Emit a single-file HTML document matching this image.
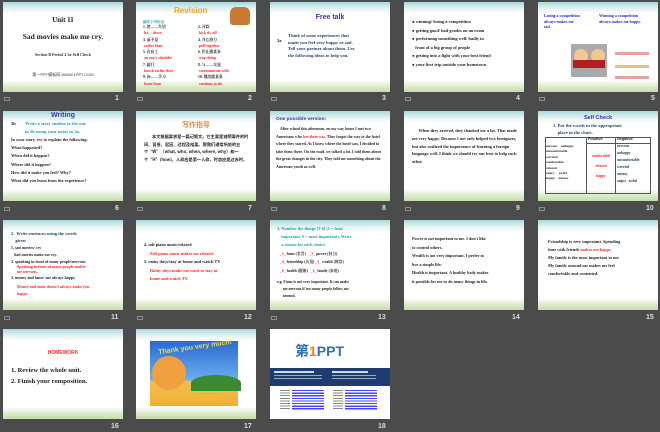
<!DOCTYPE html>
<html><head><meta charset="utf-8"><style>
*{margin:0;padding:0;box-sizing:border-box}
body{width:660px;height:432px;background:#4b4b4b;position:relative;overflow:hidden;font-family:"Liberation Serif","Noto Serif CJK SC",serif}
.s{position:absolute;width:120px;height:90px;background:#fff;overflow:hidden}
.g::before{content:"";position:absolute;left:0;top:0;right:0;height:12px;background:linear-gradient(#a9d9dc,#e6f4f3 60%,rgba(255,255,255,0))}
.g::after{content:"";position:absolute;left:0;bottom:0;right:0;height:12px;background:linear-gradient(rgba(255,255,255,0),#dfeccf 50%,#c6dca8)}
.s div,.s span.p{position:absolute;z-index:2}
.n{position:absolute;color:#ddd;font:bold 7px "Liberation Sans",sans-serif}
.ic{position:absolute;width:6px;height:4px;border:1px solid #aaa;opacity:.7}
.t{font-size:4.6px;line-height:7.6px;color:#222;font-weight:bold}
.r{color:#f22}
.b{color:#2a2aa8}
.c{color:#1aa0a8}
.h{font-family:"Liberation Sans",sans-serif;font-weight:bold}
</style></head><body>

<!-- Row 1 -->
<div class="s g" style="left:3px;top:2px">
 <div class="h" style="left:0;width:120px;top:14px;text-align:center;font-family:'Liberation Serif';font-size:7px;color:#222">Unit 11</div>
 <div style="left:0;width:120px;top:30px;text-align:center;font-size:7.5px;font-weight:bold;color:#222">Sad movies make me cry.</div>
 <div style="left:0;width:120px;top:50px;text-align:center;font-size:4px;font-weight:bold;color:#333">Section B  Period 4 3a-Self Check</div>
 <div style="left:0;width:120px;top:70px;text-align:center;font:4px 'Liberation Sans','Noto Sans CJK SC',sans-serif;color:#333">第一PPT模板网-WWW.1PPT.COM</div>
</div>
<div class="s g" style="left:136px;top:2px">
 <div class="h" style="left:38px;top:4px;font-size:8px;color:#f0a020">Revision</div>
 <div style="left:94px;top:5px;width:20px;height:18px;background:#c87a30;border-radius:6px 6px 3px 3px"></div>
 <div style="left:7px;top:18px;font-size:3.5px;color:#1aa;font-weight:bold">翻译下列短语。</div>
 <div class="t" style="left:7px;top:22px;font-size:3.8px;line-height:6.3px">1. 使……失望<br><span class="r">&nbsp;let… down</span><br>3. 而不是<br><span class="r">&nbsp;rather than</span><br>5. 在肩上<br><span class="r">&nbsp;on one's shoulder</span><br>7. 敲门<br><span class="r">&nbsp;knock on the door</span><br>9. 向……学习<br><span class="r">&nbsp;learn from</span></div>
 <div class="t" style="left:62px;top:22px;font-size:3.8px;line-height:6.3px">2. 开除<br><span class="r">&nbsp;kick sb. off</span><br>4. 齐心协力<br><span class="r">&nbsp;pull together</span><br>6. 停止做某事<br><span class="r">&nbsp;stop doing</span><br>8. 与……交流<br><span class="r">&nbsp;communicate with</span><br>10. 继续做某事<br><span class="r">&nbsp;continue to do</span></div>
</div>
<div class="s g" style="left:270px;top:2px">
 <div class="h b" style="left:0;width:120px;top:12px;text-align:center;font-size:7px;color:#3636b0">Free talk</div>
 <div class="t" style="left:7px;top:35px">3a</div>
 <div class="t" style="left:18px;top:31px;color:#246;line-height:6.6px">Think of some experiences that<br>made you feel very happy or sad.<br>Tell your partner about them. Use<br>the following ideas to help you.</div>
</div>
<div class="s g" style="left:404px;top:2px">
 <div class="t" style="left:8px;top:16px;font-size:4.4px;line-height:8.6px">● winning/ losing a competition<br>● getting good/ bad grades on an exam<br>● performing something well/ badly in<br>&nbsp;&nbsp;&nbsp;front of a big group of people<br>● getting into a fight with your best friend<br>● your first trip outside your hometown</div>
</div>
<div class="s g" style="left:538px;top:2px">
 <div class="t b" style="left:6px;top:11px;font-size:4px;line-height:5.5px">Losing a competition<br>always makes me<br>sad.</div>
 <div class="t b" style="left:61px;top:11px;font-size:4px;line-height:5.5px">Winning a competition<br>always makes me happy.</div>
 <div style="left:33px;top:42px;width:36px;height:33px;background:#aaa"></div>
 <div style="left:36px;top:47px;width:14px;height:14px;background:#f2c890;border-radius:50%"></div>
 <div style="left:53px;top:47px;width:14px;height:14px;background:#f2c890;border-radius:50%"></div>
 <div style="left:35px;top:58px;width:32px;height:8px;background:#b02020"></div>
 <div style="left:77px;top:50px;width:34px;height:3px;background:#e8a0a0"></div>
 <div style="left:77px;top:63px;width:34px;height:3px;background:#e8c080"></div>
 <div style="left:77px;top:74px;width:34px;height:3px;background:#e0a0a0"></div>
</div>

<!-- Row 2 -->
<div class="s g" style="left:3px;top:111px">
 <div class="h" style="left:0;width:120px;top:1px;text-align:center;font-size:7px;color:#3838b0">Writing</div>
 <div class="t" style="left:8px;top:9px">3b</div>
 <div class="t c" style="left:22px;top:9px">Write a story similar to the one<br>in 2b using your notes in 3a.</div>
 <div class="t" style="left:8px;top:25px;line-height:8.2px;font-size:4.3px">In your story, try to explain the following:<br>What happened?<br>When did it happen?<br>Where did it happen?<br>How did it make you feel? Why?<br>What did you learn from the experience?</div>
</div>
<div class="s g" style="left:136px;top:111px">
 <div class="h" style="left:0;width:120px;top:9px;text-align:center;font:bold 7px 'Noto Sans CJK SC',sans-serif;color:#e09050">写作指导</div>
 <div class="t" style="left:8px;top:23px;width:106px;font:bold 4.2px/7.6px 'Noto Sans CJK SC',sans-serif;color:#222;text-indent:8px">本文根据要求是一篇记叙文。它主要是说明事件的时间、背景、起因、过程及结果。即我们通常所说的五个“W”（what, who, when, where, why）和一个“H”(how)。人称应是第一人称，时态应是过去时。</div>
</div>
<div class="s g" style="left:270px;top:111px">
 <div class="h" style="left:6px;top:6px;font-size:4.8px;color:#3030b0">One possible version:</div>
 <div class="t" style="left:6px;top:15px;width:110px;font-size:3.9px;line-height:7.6px">&nbsp;&nbsp;&nbsp;&nbsp;After school this afternoon, on my way home I met two Americans who <span class="r">lost their way</span>. They forgot the way to the hotel where they stayed. As I knew where the hotel was, I decided to take them there. On the road, we talked a lot. I told them about the great changes in the city. They told me something about the American youth as well.</div>
</div>
<div class="s g" style="left:404px;top:111px">
 <div class="t" style="left:8px;top:16px;width:106px;font-size:4.3px;line-height:7.8px">&nbsp;&nbsp;&nbsp;&nbsp;&nbsp;&nbsp;When they arrived, they thanked me a lot. That made me very happy. Because I not only helped two foreigners, but also realized the importance of learning a foreign language well. I think we should try our best to help each other.</div>
</div>
<div class="s g" style="left:538px;top:111px">
 <div class="h" style="left:0;width:120px;top:4px;text-align:center;font-size:5.5px;color:#3030b0">Self Check</div>
 <div class="t" style="left:15px;top:11px;color:#246;line-height:7px">1. Put the words in the appropriate<br>&nbsp;&nbsp;&nbsp;&nbsp;place in the chart.</div>
 <div style="left:7px;top:26px;width:106px;height:57px;border:0.6px solid #555"></div>
 <div style="left:48px;top:26px;width:0.6px;height:57px;background:#555"></div>
 <div style="left:77px;top:26px;width:0.6px;height:57px;background:#555"></div>
 <div style="left:48px;top:32px;width:65px;height:0.6px;background:#555"></div>
 <div class="t" style="left:50px;top:25px;font-size:3.8px;font-family:'Liberation Sans'">Positive</div>
 <div class="t" style="left:79px;top:25px;font-size:3.8px;font-family:'Liberation Sans'">Negative</div>
 <div class="t" style="left:8px;top:33px;font-size:3.4px;line-height:5.4px">nervous&nbsp;&nbsp;&nbsp; unhappy<br>uncomfortable<br>worried<br>comfortable<br>relaxed<br>angry&nbsp;&nbsp;&nbsp;&nbsp; awful<br>happy&nbsp;&nbsp;&nbsp; uneasy</div>
 <div class="t r" style="left:49px;top:40px;font-size:3.6px;line-height:10px;text-align:center;width:28px">comfortable<br>relaxed<br>happy</div>
 <div class="t" style="left:79px;top:32px;font-size:3.6px;line-height:7px;color:#244">nervous<br>unhappy<br>uncomfortable<br>worried<br>uneasy<br>angry&nbsp;&nbsp; awful</div>
</div>

<!-- Row 3 -->
<div class="s g" style="left:3px;top:220px">
 <div class="t" style="left:8px;top:10px;color:#246;font-size:4.4px;line-height:7.2px">2.&nbsp; Write sentences using the words<br>&nbsp;&nbsp;&nbsp;&nbsp;given.</div>
 <div class="t" style="left:8px;top:24px;font-size:4px;line-height:7px">1. sad movies/ cry<br>&nbsp;&nbsp;&nbsp;Sad movies make me cry.<br>2. speaking in front of many people/nervous</div>
 <div class="t r" style="left:14px;top:45px;font-size:4px;line-height:4.6px">Speaking in front of many people makes<br>me nervous.</div>
 <div class="t" style="left:8px;top:54px;font-size:4px">3. money and fame/ not always happy</div>
 <div class="t r" style="left:14px;top:63px;font-size:4px;line-height:7px">Money and fame doesn't always make you<br>happy</div>
</div>
<div class="s g" style="left:136px;top:220px">
 <div class="t" style="left:8px;top:21px;font-size:4.2px;line-height:8px">4. soft piano music/relaxed</div>
 <div class="t r" style="left:14px;top:30px;font-size:4.2px">Soft piano music makes me relaxed.</div>
 <div class="t" style="left:8px;top:38px;font-size:4.4px">5. rainy days/stay at home and watch TV</div>
 <div class="t r" style="left:14px;top:47px;font-size:4.4px;line-height:8px">Rainy days make me want to stay at<br>home and watch TV.</div>
</div>
<div class="s g" style="left:270px;top:220px">
 <div class="t c" style="left:7px;top:5px;font-size:4.3px;line-height:8px">3. Number the things [1-6] (1 = least<br>&nbsp;&nbsp;&nbsp;&nbsp;important, 6 = most important). Write<br>&nbsp;&nbsp;&nbsp;&nbsp;a reason for each choice.</div>
 <div class="t" style="left:10px;top:30px;font-size:3.8px;line-height:8.4px;font-family:'Liberation Serif','Noto Serif CJK SC',serif"><span class="r">_1_</span> fame (名誉)&nbsp;&nbsp;&nbsp; <span class="r">_5_</span> power (权力)<br><span class="r">_4_</span> friendship (友谊) <span class="r">_3_</span> wealth (财富)<br><span class="r">_6_</span> health (健康)&nbsp;&nbsp; <span class="r">_2_</span> family (家庭)</div>
 <div class="t" style="left:7px;top:59px;font-size:3.8px;line-height:6.8px">e.g. Fame is not very important. It can make<br>&nbsp;&nbsp;&nbsp;&nbsp;&nbsp;&nbsp;me nervous if too many people follow me<br>&nbsp;&nbsp;&nbsp;&nbsp;&nbsp;&nbsp;around.</div>
</div>
<div class="s g" style="left:404px;top:220px">
 <div class="t" style="left:8px;top:15px;font-size:4.2px;line-height:8.6px">Power is not important to me. I don't like<br>to control others.<br>Wealth is not very important. I prefer to<br>live a simple life.<br>Health is important. A healthy body makes<br>it possible for me to do many things in life.</div>
</div>
<div class="s g" style="left:538px;top:220px">
 <div class="t" style="left:10px;top:18px;font-size:4.3px;line-height:8px">Friendship is very important. Spending<br>time with friends <span class="r">makes me happy.</span><br>My family is the most important to me.<br>My family around me makes me feel<br>comfortable and contented.</div>
</div>

<!-- Row 4 -->
<div class="s g" style="left:3px;top:329px">
 <div class="h" style="left:0;width:120px;top:21px;text-align:center;font-size:5px;color:#f03030">HOMEWORK</div>
 <div style="left:8px;top:36px;font-size:6.6px;line-height:11px;font-weight:bold;color:#222">1. Review the whole unit.<br>2. Finish your composition.</div>
</div>
<div class="s g" style="left:136px;top:329px">
 <div style="left:14px;top:12px;width:88px;height:65px;background:linear-gradient(#2a6ad0,#6aaef0 60%,#f0c050 62%,#f0b030)"></div>
 <div style="left:16px;top:27px;width:34px;height:34px;border-radius:50%;background:#f0a040"></div>
 <div style="left:55px;top:46px;width:50px;height:16px;border-radius:50% 50% 0 0;background:#3a8a30"></div>
 <div style="left:22px;top:15px;font:bold 7px 'Liberation Sans',sans-serif;color:#e8e040;transform:rotate(-8deg)">Thank you very much!</div>
</div>
<div class="s" style="left:270px;top:329px">
 <div style="left:25px;top:12px;font:bold 14px 'Liberation Sans','Noto Sans CJK SC',sans-serif;color:#2a70c0">第<span style="color:#f08020">1</span>PPT</div>
 <div style="left:0;top:39px;width:120px;height:18px;background:#1e3c70"></div>
 <div style="left:4px;top:42px;width:40px;height:1.5px;background:#cde"></div>
 <div style="left:4px;top:46px;width:48px;height:1px;background:#9ab"></div>
 <div style="left:4px;top:49px;width:48px;height:1px;background:#9ab"></div>
 <div style="left:62px;top:42px;width:36px;height:1.5px;background:#cde"></div>
 <div style="left:62px;top:46px;width:44px;height:1px;background:#9ab"></div>
 <div style="left:62px;top:49px;width:44px;height:1px;background:#9ab"></div>
 <div style="left:22px;top:61px;width:32px;height:20px;background:repeating-linear-gradient(#44f 0 1.2px,transparent 1.2px 2.6px)"></div>
 <div style="left:75px;top:61px;width:32px;height:20px;background:repeating-linear-gradient(#44f 0 1.2px,transparent 1.2px 2.6px)"></div>
 <div style="left:10px;top:61px;width:10px;height:20px;background:repeating-linear-gradient(#888 0 1px,transparent 1px 2.6px)"></div>
 <div style="left:63px;top:61px;width:10px;height:20px;background:repeating-linear-gradient(#888 0 1px,transparent 1px 2.6px)"></div>
</div>

<!-- numbers -->
<div class="n" style="left:115px;top:95px">1</div>
<div class="n" style="left:248px;top:95px">2</div>
<div class="n" style="left:382px;top:95px">3</div>
<div class="n" style="left:516px;top:95px">4</div>
<div class="n" style="left:651px;top:95px">5</div>
<div class="n" style="left:115px;top:205px">6</div>
<div class="n" style="left:248px;top:205px">7</div>
<div class="n" style="left:382px;top:205px">8</div>
<div class="n" style="left:516px;top:205px">9</div>
<div class="n" style="left:646px;top:205px">10</div>
<div class="n" style="left:111px;top:314px">11</div>
<div class="n" style="left:244px;top:314px">12</div>
<div class="n" style="left:378px;top:314px">13</div>
<div class="n" style="left:512px;top:314px">14</div>
<div class="n" style="left:646px;top:314px">15</div>
<div class="n" style="left:111px;top:423px">16</div>
<div class="n" style="left:244px;top:423px">17</div>
<div class="n" style="left:378px;top:423px">18</div>
<div class="ic" style="left:4px;top:97px"></div><div class="ic" style="left:137px;top:97px"></div><div class="ic" style="left:271px;top:97px"></div><div class="ic" style="left:405px;top:97px"></div><div class="ic" style="left:539px;top:97px"></div>
<div class="ic" style="left:4px;top:207px"></div><div class="ic" style="left:137px;top:207px"></div><div class="ic" style="left:271px;top:207px"></div><div class="ic" style="left:405px;top:207px"></div><div class="ic" style="left:539px;top:207px"></div>
<div class="ic" style="left:4px;top:316px"></div><div class="ic" style="left:137px;top:316px"></div><div class="ic" style="left:271px;top:316px"></div>
</body></html>
